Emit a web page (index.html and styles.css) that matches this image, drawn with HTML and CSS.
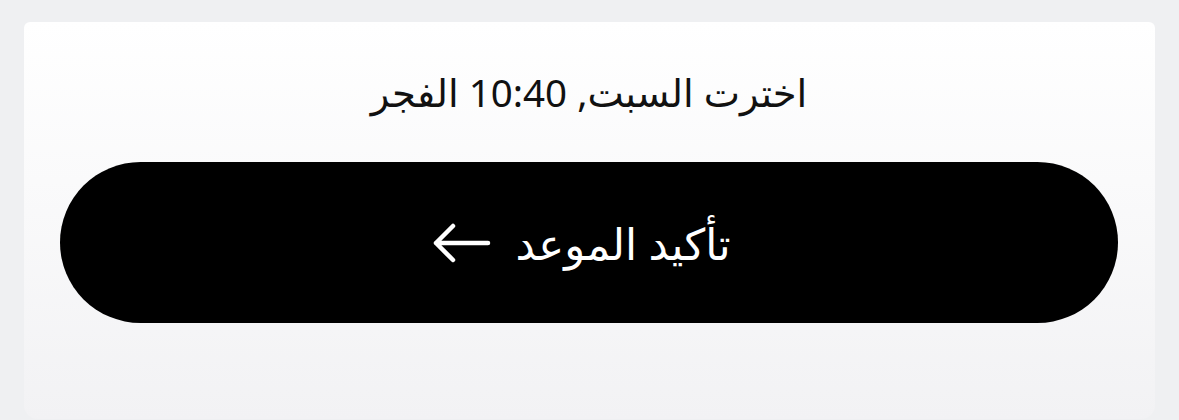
FILE: index.html
```html
<!DOCTYPE html>
<html lang="ar" dir="rtl">
<head>
<meta charset="utf-8">
<link rel="stylesheet" href="styles.css">
</head>
<body>
<div class="card">
  <p class="summary">اخترت السبت, 10:40 الفجر</p>
  <button class="confirm">
    <span class="label">تأكيد الموعد</span>
    <svg class="arrow" width="58" height="40" viewBox="0 0 58 40" aria-hidden="true">
      <path d="M55 20 H3 M20 3 L3 20 L20 37" fill="none" stroke="#fff" stroke-width="4.5" stroke-linecap="round" stroke-linejoin="round"/>
    </svg>
  </button>
</div>
</body>
</html>
```
FILE: styles.css
```css
html, body {
  margin: 0;
  padding: 0;
  background: #eff0f2;
  height: 420px;
  overflow: hidden;
}
body {
  font-family: "Noto Sans", "DejaVu Sans", sans-serif;
}
.card {
  margin: 22px 24px 0 24px;
  height: 397px;
  box-sizing: border-box;
  background: linear-gradient(to bottom, #ffffff 0%, #fafafb 40%, #f2f2f4 100%);
  border-radius: 6px 6px 14px 14px;
  padding: 45px 37px 0 36px;
  display: flex;
  flex-direction: column;
  align-items: stretch;
}
.summary {
  margin: 0;
  text-align: center;
  font-size: 38.5px;
  line-height: 50px;
  color: #111;
}
.confirm {
  margin-top: 45px;
  height: 161px;
  border: none;
  border-radius: 80.5px;
  background: #000;
  color: #fff;
  display: flex;
  align-items: center;
  justify-content: center;
  gap: 24px;
  font-family: inherit;
  font-size: 43.5px;
  padding: 0 14px 0 0;
}
.label {
  line-height: 54px;
}
.arrow {
  display: block;
}
```
